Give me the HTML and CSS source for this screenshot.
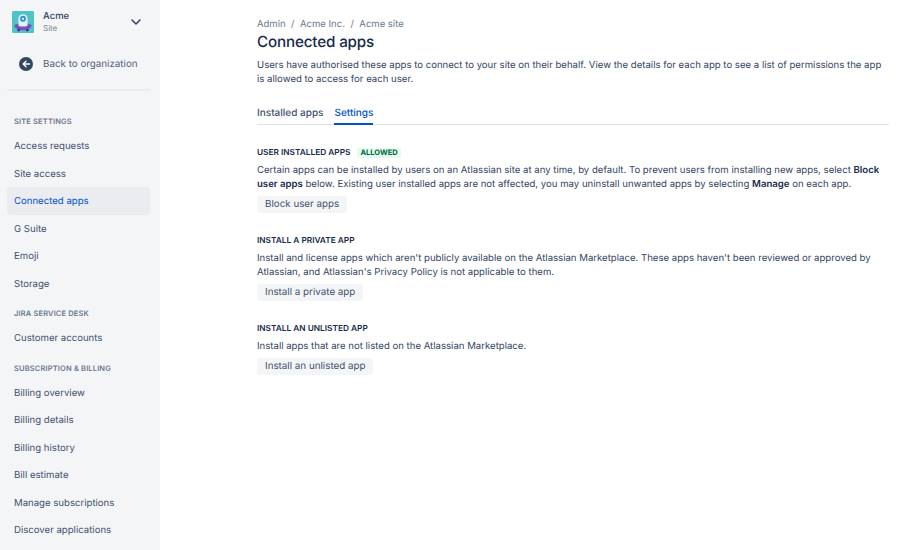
FILE: index.html
```html
<!DOCTYPE html>
<html lang="en">
<head>
  <meta charset="UTF-8" />
  <title>Connected apps</title>
  <link rel="stylesheet" href="styles.css">
</head>
<body>
  <aside class="sidebar">
    <div class="site-switch">
      <svg class="logo" width="24" height="24" viewBox="0 0 24 24">
        <rect width="24" height="24" rx="1.5" fill="#4fc3c7"/>
        <path d="M2.500 15.500c2-1.500 4-2 9.500-2s7.500.5 9.500 2c0 3-4 5.500-9.500 5.500s-9.500-2.500-9.500-5.500z" fill="#7a4fc0"/>
        <path d="M6 19.500h2.500v2.500H6zM15.500 19.500H18v2.500h-2.500z" fill="#3a2a80"/>
        <path d="M7 15.500V8.500a5 5 0 0 1 10 0v7a5 1.500 0 0 1-10 0z" fill="#dff3fb"/>
        <circle cx="12" cy="8.500" r="3.200" fill="#2f8fd0"/>
        <circle cx="12" cy="8.500" r="1.200" fill="#fff"/>
      </svg>
      <div class="site-name">
        <div class="site-title">Acme</div>
        <div class="site-sub">Site</div>
      </div>
      <svg class="chevron" width="12" height="8" viewBox="0 0 12 8">
        <path d="M2 2l4 4 4-4" fill="none" stroke="#344563" stroke-width="1.600" stroke-linecap="round" stroke-linejoin="round"/>
      </svg>
    </div>
    <a class="back-link">
      <svg width="14" height="14" viewBox="0 0 14 14">
        <circle cx="7" cy="7" r="7" fill="#344563"/>
        <path d="M10.500 7H4.500M7 4.300L4.200 7 7 9.700" fill="none" stroke="#fff" stroke-width="1.500" stroke-linecap="round" stroke-linejoin="round"/>
      </svg>
      Back to organization
    </a>
    <div class="divider"></div>

    <h4 class="nav-heading first">Site settings</h4>
    <a class="nav-item">Access requests</a>
    <a class="nav-item">Site access</a>
    <a class="nav-item active">Connected apps</a>
    <a class="nav-item">G Suite</a>
    <a class="nav-item">Emoji</a>
    <a class="nav-item">Storage</a>

    <h4 class="nav-heading">Jira Service Desk</h4>
    <a class="nav-item">Customer accounts</a>

    <h4 class="nav-heading">Subscription &amp; billing</h4>
    <a class="nav-item">Billing overview</a>
    <a class="nav-item">Billing details</a>
    <a class="nav-item">Billing history</a>
    <a class="nav-item">Bill estimate</a>
    <a class="nav-item">Manage subscriptions</a>
    <a class="nav-item">Discover applications</a>
  </aside>

  <main class="content">
    <div class="breadcrumbs">
      <span>Admin</span><span class="sep">/</span><span>Acme Inc.</span><span class="sep">/</span><span>Acme site</span>
    </div>
    <h1>Connected apps</h1>
    <p class="intro">Users have authorised these apps to connect to your site on their behalf. View the details for each app to see a list of permissions the app is allowed to access for each user.</p>

    <div class="tabs">
      <a class="tab">Installed apps</a>
      <a class="tab selected">Settings</a>
    </div>

    <section class="block">
      <h2>User installed apps <span class="lozenge">Allowed</span></h2>
      <p>Certain apps can be installed by users on an Atlassian site at any time, by default. To prevent users from installing new apps, select <b>Block user apps</b> below. Existing user installed apps are not affected, you may uninstall unwanted apps by selecting <b>Manage</b> on each app.</p>
      <button>Block user apps</button>
    </section>

    <section class="block">
      <h2>Install a private app</h2>
      <p>Install and license apps which aren't publicly available on the Atlassian Marketplace. These apps haven't been reviewed or approved by Atlassian, and Atlassian's Privacy Policy is not applicable to them.</p>
      <button>Install a private app</button>
    </section>

    <section class="block">
      <h2>Install an unlisted app</h2>
      <p>Install apps that are not listed on the Atlassian Marketplace.</p>
      <button>Install an unlisted app</button>
    </section>
  </main>
</body>
</html>
```

FILE: styles.css
```css
html, body {
  height: 100%;
}
body {
  margin: 0;
  display: flex;
  height: 550px;
  overflow: hidden;
  background-color: #fff;
  color: #172b4d;
  font-family: Inter, 'Liberation Sans', sans-serif;
  font-size: 9.6px;
  text-rendering: geometricPrecision;
}
.sidebar {
  width: 160px;
  flex-shrink: 0;
  box-sizing: border-box;
  padding: 11px 10px 0 7px;
  background-color: #f4f5f7;
  overflow: hidden;
}
.site-switch {
  display: flex;
  align-items: center;
  padding-left: 5px;
  height: 22px;
}
.logo {
  width: 22px;
  height: 22px;
  flex-shrink: 0;
}
.site-name {
  margin-left: 9px;
  flex-grow: 1;
}
.site-title {
  font-size: 9.5px;
  font-weight: 500;
  line-height: 12px;
  color: #344563;
}
.site-sub {
  font-size: 8px;
  line-height: 10px;
  color: #7a869a;
}
.chevron {
  margin-right: 8px;
}
.back-link {
  display: flex;
  align-items: center;
  gap: 10px;
  margin-top: 23px;
  padding-left: 12px;
  height: 16px;
  color: #505f79;
  font-size: 9.8px;
}
.divider {
  height: 2px;
  margin-top: 17px;
  background-color: #ebecf0;
}
.nav-heading {
  margin: 0;
  padding: 12px 7px 6px;
  font-size: 7.5px;
  font-weight: 600;
  line-height: 9px;
  letter-spacing: 0.15px;
  text-transform: uppercase;
  color: #6b778c;
}
.nav-heading.first {
  padding-top: 26px;
}
.nav-item {
  display: flex;
  align-items: center;
  box-sizing: border-box;
  height: 27.5px;
  padding: 2px 0 0 7px;
  border-radius: 3px;
  font-size: 9.6px;
  color: #42526e;
}
.nav-item.active {
  background-color: #ebecf0;
  color: #0052cc;
}
.content {
  width: 632px;
  margin-left: 97px;
  padding-top: 18px;
}
.breadcrumbs {
  display: flex;
  line-height: 13px;
  color: #6b778c;
  font-size: 9.5px;
}
.sep {
  margin: 0 5.5px;
}
h1 {
  margin: 1px 0 0;
  font-size: 15.2px;
  font-weight: 500;
  line-height: 20px;
  letter-spacing: -0.15px;
}
.intro {
  margin: 7px 0 0;
}
p {
  font-size: 9.6px;
  line-height: 14px;
  color: #344563;
}
.tabs {
  display: flex;
  gap: 11px;
  margin-top: 13px;
  border-bottom: 1px solid #dfe1e6;
}
.tab {
  padding: 7px 0 4px;
  font-size: 10px;
  font-weight: 500;
  line-height: 12px;
  color: #42526e;
  margin-bottom: -1px;
}
.tab.selected {
  color: #0052cc;
  border-bottom: 2px solid #0052cc;
}
.block {
  margin-top: 21.5px;
}
h2 {
  display: flex;
  align-items: center;
  gap: 7px;
  margin: 0;
  font-size: 8.3px;
  font-weight: 600;
  line-height: 12px;
  text-transform: uppercase;
  color: #172b4d;
}
.lozenge {
  padding: 0 3px;
  border-radius: 2px;
  background-color: #e3fcef;
  color: #006644;
  font-size: 7.5px;
  font-weight: 700;
  line-height: 10px;
}
.block p {
  margin: 5px 0 4px;
}
.block b {
  font-weight: 600;
  color: #172b4d;
}
button {
  display: block;
  height: 17.5px;
  padding: 1px 8px 0;
  border: none;
  border-radius: 3px;
  background-color: #f4f5f7;
  color: #42526e;
  font-family: inherit;
  font-size: 9.8px;
  text-rendering: geometricPrecision;
}
```
